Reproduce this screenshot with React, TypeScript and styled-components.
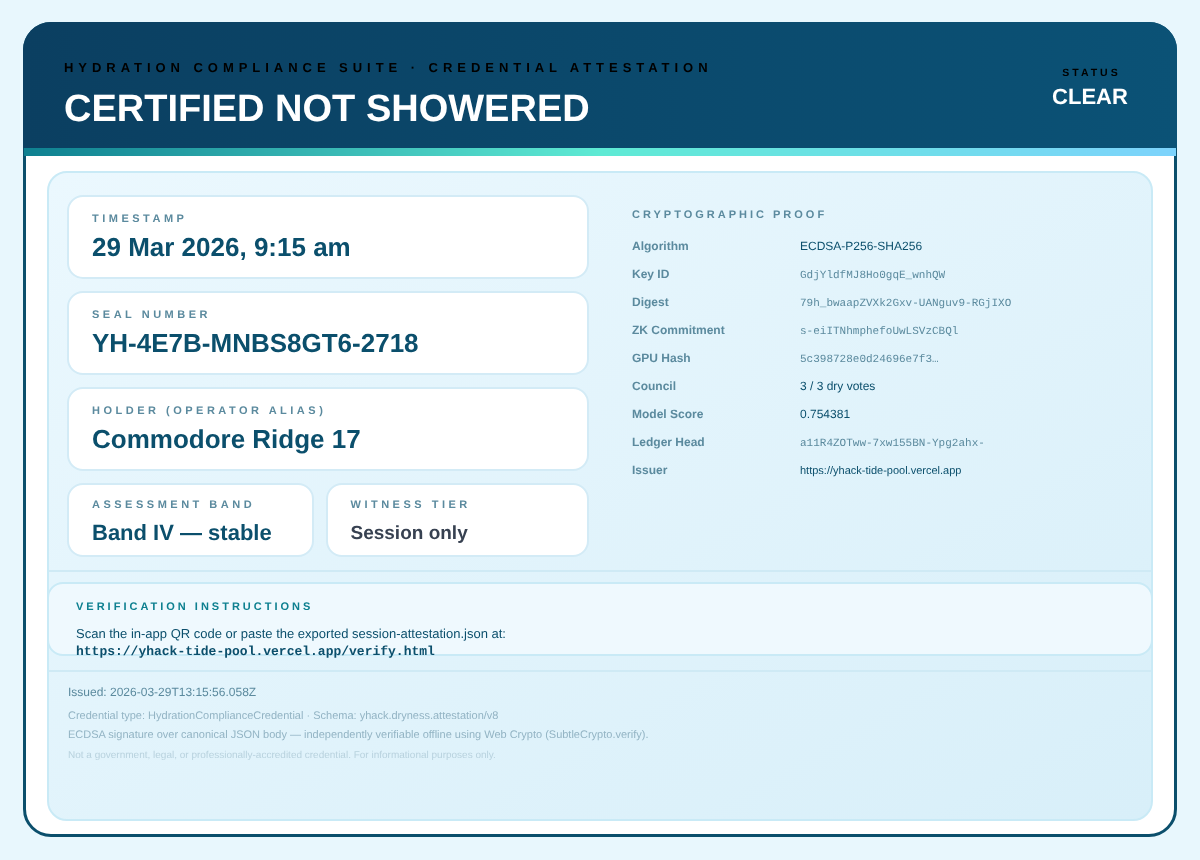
import React from 'react';
import styled, { createGlobalStyle } from 'styled-components';

const GlobalStyle = createGlobalStyle`
    html, body {
        margin: 0;
        padding: 0;
        background: #e8f7fd;
    }
    * {
        box-sizing: border-box;
    }
    body {
        text-rendering: geometricPrecision;
    }
`;

const Page = styled.div`
    width: 1200px;
    height: 860px;
    padding: 22px 23px 23px;
    font-family: "Liberation Sans", Arial, sans-serif;
`;

const Certificate = styled.div`
    height: 815px;
    display: flex;
    flex-direction: column;
    background: #ffffff;
    border: 3px solid #0b4f6c;
    border-radius: 28px;
    will-change: transform;
`;

const Header = styled.header`
    height: 126px;
    flex-shrink: 0;
    margin: -3px -3px 0;
    padding: 33px 41px 0;
    display: flex;
    justify-content: space-between;
    border-radius: 28px 28px 0 0;
    background: linear-gradient(90deg, #0b3f61, #0b5276);
`;

const Eyebrow = styled.div`
    font-size: 13px;
    line-height: 13px;
    font-weight: 700;
    letter-spacing: 4.96px;
    color: #000000;
    margin-top: 6px;
`;

const Title = styled.h1`
    margin: 15px 0 0;
    font-size: 38px;
    line-height: 41px;
    font-weight: 700;
    color: #ffffff;
`;

const StatusBlock = styled.div`
    width: 88px;
    margin: 12px 2px 0 0;
    text-align: center;
`;

const StatusLabel = styled.div`
    font-size: 10.5px;
    line-height: 12px;
    font-weight: 700;
    letter-spacing: 3px;
    text-indent: 3px;
    color: #000000;
`;

const StatusValue = styled.div`
    margin-top: 5px;
    font-size: 22px;
    line-height: 25px;
    font-weight: 700;
    color: #ffffff;
`;

const Stripe = styled.div`
    height: 8px;
    flex-shrink: 0;
    margin: 0 -2px;
    background: linear-gradient(90deg, #0e8090, #5eead4 50%, #7dd3fc);
`;

const Panel = styled.main`
    flex: 1;
    margin: 15px 21px 13px;
    display: flex;
    flex-direction: column;
    border: 2px solid #c9eaf6;
    border-radius: 20px;
    background: linear-gradient(150deg, #ebf8fe, #d8eff9);
`;

const TopGrid = styled.section`
    height: 399px;
    flex-shrink: 0;
    padding: 22px 18px 0;
    display: grid;
    grid-template-columns: 522px 1fr;
    column-gap: 43px;
    border-bottom: 2px solid #cfeaf5;
`;

const FieldStack = styled.div`
    display: flex;
    flex-direction: column;
    gap: 12px;
`;

const FieldRow = styled.div`
    display: grid;
    grid-template-columns: 246.5px 1fr;
    gap: 12px;
`;

const FieldCard = styled.div<{ $compact?: boolean }>`
    height: ${ p => p.$compact ? '74px' : '84px' };
    padding: ${ p => p.$compact ? '14px 23px 0' : '16px 23px 0' };
    background: #ffffff;
    border: 2px solid #d3ebf6;
    border-radius: 16px;
`;

const FieldLabel = styled.div`
    font-size: 11px;
    line-height: 12px;
    font-weight: 700;
    letter-spacing: 3.5px;
    color: #5b8a9e;
`;

const FieldValue = styled.div<{ $size: number; $muted?: boolean }>`
    margin-top: ${ p => p.$muted ? '8px' : '7px' };
    font-size: ${ p => p.$size }px;
    line-height: 30px;
    font-weight: 700;
    color: ${ p => p.$muted ? '#374151' : '#0b4f6c' };
`;

const Proof = styled.div`
    padding-top: 14px;
`;

const ProofTitle = styled.div`
    font-size: 11px;
    line-height: 12px;
    font-weight: 700;
    letter-spacing: 3px;
    color: #5b8a9e;
    margin-bottom: 11px;
`;

const ProofRow = styled.div`
    height: 28px;
    display: grid;
    grid-template-columns: 168px 1fr;
    align-items: baseline;
    line-height: 28px;
`;

const ProofLabel = styled.span`
    font-size: 12px;
    font-weight: 700;
    color: #5b8a9e;
`;

const ProofValue = styled.span<{ $mono?: boolean; $small?: boolean }>`
    font-family: ${ p => p.$mono ? '"Liberation Mono", "Courier New", monospace' : 'inherit' };
    font-size: ${ p => p.$mono || p.$small ? '11px' : '12px' };
    color: ${ p => p.$mono ? '#5b8a9e' : '#0b4f6c' };
`;

const Instructions = styled.section`
    height: 74px;
    flex-shrink: 0;
    margin: 10px -2px 0;
    padding: 17px 27px 0;
    background: #eff9fe;
    border: 2px solid #c9eaf6;
    border-radius: 16px;
`;

const InstructionsTitle = styled.div`
    font-size: 11px;
    line-height: 12px;
    font-weight: 700;
    letter-spacing: 3px;
    color: #0e8090;
    margin-bottom: 12px;
`;

const InstructionsText = styled.div`
    font-size: 13px;
    line-height: 17px;
    color: #0b4f6c;
`;

const VerifyUrl = styled.div`
    margin-top: 2px;
    font-family: "Liberation Mono", "Courier New", monospace;
    font-size: 13px;
    line-height: 15px;
    font-weight: 700;
    color: #0b4f6c;
`;

const Footer = styled.footer`
    flex: 1;
    margin-top: 14px;
    padding: 13px 19px 0;
    border-top: 2px solid #cfeaf5;
`;

const FooterLine = styled.div<{ $size: number; $colour: string; $gap: number }>`
    font-size: ${ p => p.$size }px;
    line-height: 14px;
    color: ${ p => p.$colour };
    margin-bottom: ${ p => p.$gap }px;
`;

type ProofItem = { label: string; value: string; mono?: boolean; small?: boolean };

const proofItems: ProofItem[] = [
    { label: 'Algorithm', value: 'ECDSA-P256-SHA256' },
    { label: 'Key ID', value: 'GdjYldfMJ8Ho0gqE_wnhQW', mono: true },
    { label: 'Digest', value: '79h_bwaapZVXk2Gxv-UANguv9-RGjIXO', mono: true },
    { label: 'ZK Commitment', value: 's-eiITNhmphefoUwLSVzCBQl', mono: true },
    { label: 'GPU Hash', value: '5c398728e0d24696e7f3…', mono: true },
    { label: 'Council', value: '3 / 3 dry votes' },
    { label: 'Model Score', value: '0.754381' },
    { label: 'Ledger Head', value: 'a11R4ZOTww-7xw155BN-Ypg2ahx-', mono: true },
    { label: 'Issuer', value: 'https://yhack-tide-pool.vercel.app', small: true },
];

export default function App(): JSX.Element {
    return (
        <Page>
            <GlobalStyle />
            <Certificate>
                <Header>
                    <div>
                        <Eyebrow>HYDRATION COMPLIANCE SUITE · CREDENTIAL ATTESTATION</Eyebrow>
                        <Title>CERTIFIED NOT SHOWERED</Title>
                    </div>
                    <StatusBlock>
                        <StatusLabel>STATUS</StatusLabel>
                        <StatusValue>CLEAR</StatusValue>
                    </StatusBlock>
                </Header>
                <Stripe />
                <Panel>
                    <TopGrid>
                        <FieldStack>
                            <FieldCard>
                                <FieldLabel>TIMESTAMP</FieldLabel>
                                <FieldValue $size={ 26 }>29 Mar 2026, 9:15 am</FieldValue>
                            </FieldCard>
                            <FieldCard>
                                <FieldLabel>SEAL NUMBER</FieldLabel>
                                <FieldValue $size={ 26 }>YH-4E7B-MNBS8GT6-2718</FieldValue>
                            </FieldCard>
                            <FieldCard>
                                <FieldLabel>HOLDER (OPERATOR ALIAS)</FieldLabel>
                                <FieldValue $size={ 26 }>Commodore Ridge 17</FieldValue>
                            </FieldCard>
                            <FieldRow>
                                <FieldCard $compact>
                                    <FieldLabel>ASSESSMENT BAND</FieldLabel>
                                    <FieldValue $size={ 22 }>Band IV — stable</FieldValue>
                                </FieldCard>
                                <FieldCard $compact>
                                    <FieldLabel>WITNESS TIER</FieldLabel>
                                    <FieldValue $size={ 19 } $muted>Session only</FieldValue>
                                </FieldCard>
                            </FieldRow>
                        </FieldStack>
                        <Proof>
                            <ProofTitle>CRYPTOGRAPHIC PROOF</ProofTitle>
                            { proofItems.map( item => (
                                <ProofRow key={ item.label }>
                                    <ProofLabel>{ item.label }</ProofLabel>
                                    <ProofValue $mono={ item.mono } $small={ item.small }>{ item.value }</ProofValue>
                                </ProofRow>
                            ) ) }
                        </Proof>
                    </TopGrid>
                    <Instructions>
                        <InstructionsTitle>VERIFICATION INSTRUCTIONS</InstructionsTitle>
                        <InstructionsText>Scan the in-app QR code or paste the exported session-attestation.json at:</InstructionsText>
                        <VerifyUrl>https://yhack-tide-pool.vercel.app/verify.html</VerifyUrl>
                    </Instructions>
                    <Footer>
                        <FooterLine $size={ 12 } $colour="#5b8a9e" $gap={ 10 }>Issued: 2026-03-29T13:15:56.058Z</FooterLine>
                        <FooterLine $size={ 11 } $colour="#93b4c4" $gap={ 5 }>Credential type: HydrationComplianceCredential · Schema: yhack.dryness.attestation/v8</FooterLine>
                        <FooterLine $size={ 11 } $colour="#93b4c4" $gap={ 7 }>ECDSA signature over canonical JSON body — independently verifiable offline using Web Crypto (SubtleCrypto.verify).</FooterLine>
                        <FooterLine $size={ 10 } $colour="#b8d2de" $gap={ 0 }>Not a government, legal, or professionally-accredited credential. For informational purposes only.</FooterLine>
                    </Footer>
                </Panel>
            </Certificate>
        </Page>
    );
}
